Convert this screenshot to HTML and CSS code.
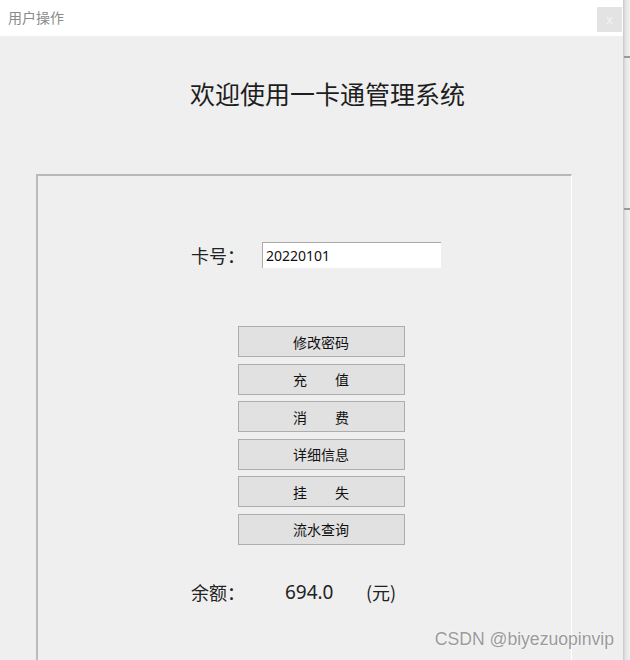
FILE: index.html
```html
<!DOCTYPE html>
<html lang="zh">
<head>
    <meta charset="UTF-8">
    <title>用户操作</title>
    <link rel="stylesheet" href="styles.css">
</head>
<body>
    <div class="screen">
        <!-- Window -->
        <div class="window">
            <div class="titlebar">
                <span class="title">用户操作</span>
                <span class="close-btn">x</span>
            </div>
            <div class="window-body">
                <h1>欢迎使用一卡通管理系统</h1>
                <div class="panel">
                    <div class="card-row">
                        <label for="card-no">卡号：</label>
                        <input type="text" id="card-no" value="20220101">
                    </div>
                    <div class="actions">
                        <button>修改密码</button>
                        <button>充&emsp;&emsp;值</button>
                        <button>消&emsp;&emsp;费</button>
                        <button>详细信息</button>
                        <button>挂&emsp;&emsp;失</button>
                        <button>流水查询</button>
                    </div>
                    <div class="balance">
                        <span class="label">余额：</span>
                        <span class="amount">694.0</span>
                        <span class="unit">(元)</span>
                    </div>
                </div>
            </div>
        </div>
        <!-- Window behind -->
        <div class="side">
            <div class="side-line first"></div>
            <div class="side-line second"></div>
        </div>
        <div class="watermark">CSDN @biyezuopinvip</div>
    </div>
</body>
</html>
```

FILE: styles.css
```css
* {
    margin: 0;
    padding: 0;
    box-sizing: border-box;
}

body {
    font-family: "Liberation Sans", "Noto Sans CJK SC", sans-serif;
    background: #f0f0f0;
    color: #222;
    width: 630px;
    height: 660px;
    overflow: hidden;
}

.screen {
    position: relative;
    display: flex;
    width: 630px;
    height: 660px;
}

/* Window */
.window {
    width: 623px;
    height: 660px;
    background: #efefef;
    display: flex;
    flex-direction: column;
}

.titlebar {
    height: 36px;
    background: #fff;
    display: flex;
    align-items: center;
    justify-content: space-between;
    padding: 0 1px 0 8px;
}

.title {
    font-size: 14px;
    color: #8a8a8a;
    font-family: "Noto Sans CJK SC", sans-serif;
    margin-top: -2px;
}

.close-btn {
    width: 25px;
    height: 25px;
    background: #e3e3e3;
    color: #f4f4f4;
    font-size: 13px;
    display: flex;
    align-items: center;
    justify-content: center;
    margin-top: 3px;
}

.window-body {
    flex: 1;
    display: flex;
    flex-direction: column;
    padding: 0 51px 0 36px;
}

h1 {
    font-family: "Noto Sans CJK SC", sans-serif;
    font-weight: normal;
    font-size: 25px;
    text-align: center;
    color: #1e1e1e;
    margin: 40px 0 0 47px;
    line-height: 34px;
}

/* Panel */
.panel {
    flex: 1;
    margin-top: 64px;
    border-top: 2px solid #b9b9b9;
    border-left: 2px solid #bcbcbc;
    border-right: 1px solid #fff;
    display: flex;
    flex-direction: column;
    align-items: center;
    padding-top: 66px;
}

.card-row {
    display: flex;
    align-items: center;
    margin-left: 23px;
}

.card-row label {
    font-family: "Noto Sans CJK SC", sans-serif;
    font-size: 18px;
    color: #222;
    width: 71px;
}

.card-row input {
    width: 179px;
    height: 26px;
    border: none;
    border-top: 1px solid #a9a9a9;
    border-left: 1px solid #a9a9a9;
    background: #fff;
    font-family: "Noto Sans", sans-serif;
    font-size: 14px;
    color: #111;
    padding: 0 3px;
    outline: none;
}

.actions {
    display: flex;
    flex-direction: column;
    gap: 6.6px;
    margin-top: 58px;
    margin-left: 33px;
}

.actions button {
    width: 167px;
    height: 31px;
    background: #e1e1e1;
    border: 1px solid #adadad;
    font-family: "Noto Sans CJK SC", sans-serif;
    font-size: 14px;
    color: #111;
}

.balance {
    display: flex;
    align-items: center;
    margin-top: 34px;
    margin-right: 22px;
    font-size: 18px;
}

.balance .label {
    font-family: "Noto Sans CJK SC", sans-serif;
    color: #222;
    width: 94px;
}

.balance .amount {
    font-family: "Noto Sans", sans-serif;
    font-size: 19px;
    width: 81px;
}

.balance .unit {
    font-family: "Noto Sans CJK SC", sans-serif;
}

/* Right side strip */
.side {
    width: 7px;
    height: 660px;
    background: linear-gradient(to right, #c8c8c8, #e6e6e6 40%, #f0f0f0);
    position: relative;
}

.side-line {
    position: absolute;
    left: 1px;
    right: 0;
    height: 2px;
    background: #9a9a9a;
}

.side-line.first {
    top: 56px;
}

.side-line.second {
    top: 208px;
}

.watermark {
    position: absolute;
    right: 16px;
    bottom: 10px;
    font-family: "Liberation Sans", sans-serif;
    font-size: 17.6px;
    color: #9b9b9b;
    text-shadow: 0 0 2px #fff;
}
```
